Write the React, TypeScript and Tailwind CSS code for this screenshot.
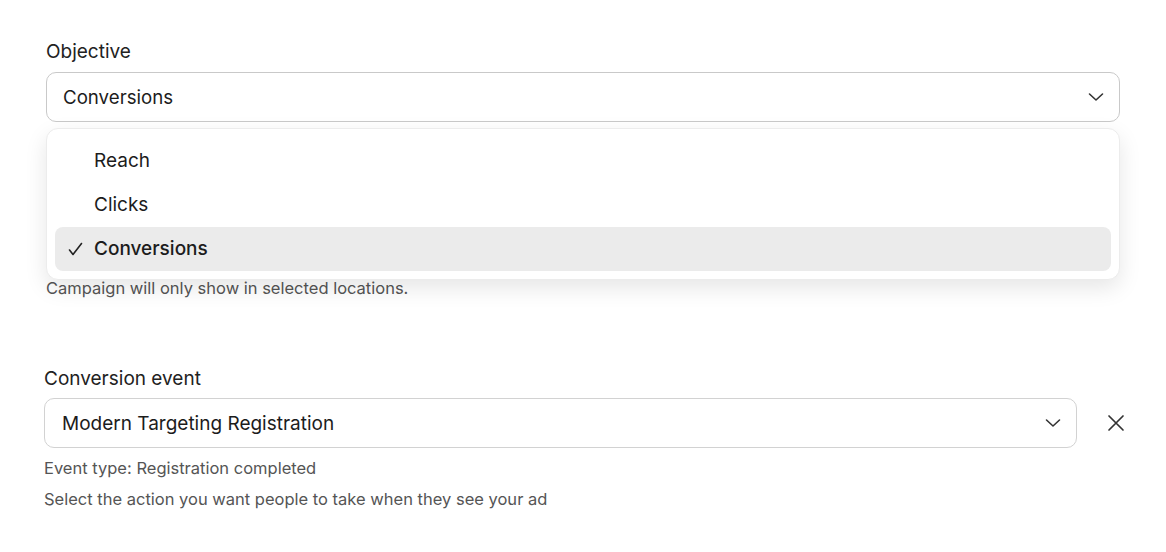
import React from "react";

const font = { fontFamily: "Inter, 'Noto Sans', sans-serif" };

function Chevron({ className = "" }: { className?: string }) {
  return (
    <svg
      className={className}
      width="18"
      height="18"
      viewBox="0 0 18 18"
      fill="none"
      stroke="#333"
      strokeWidth="1.6"
      strokeLinecap="round"
      strokeLinejoin="round"
    >
      <path d="M2.5 6 L9 12 L15.5 6" />
    </svg>
  );
}

function Close() {
  return (
    <svg
      width="18"
      height="18"
      viewBox="0 0 18 18"
      fill="none"
      stroke="#333"
      strokeWidth="1.7"
      strokeLinecap="round"
    >
      <path d="M2 2 L16 16 M16 2 L2 16" />
    </svg>
  );
}

function Check() {
  return (
    <svg
      width="15"
      height="15"
      viewBox="0 0 15 15"
      fill="none"
      stroke="#222"
      strokeWidth="1.6"
      strokeLinecap="round"
      strokeLinejoin="round"
    >
      <path d="M1.5 8 L5 12.5 L13.5 1.5" />
    </svg>
  );
}

const options = ["Reach", "Clicks", "Conversions"];

export default function App() {
  const selected = "Conversions";
  return (
    <div className="min-h-[552px] w-[1166px] bg-white text-[#1f1f1f]" style={font}>
      {/* Objective field with its open option list */}
      <div className="relative pl-[46px] pt-[38px] w-[1120px]">
        <div className="text-[19px] leading-[28px] text-[#222]">Objective</div>
        <div className="mt-[6px] flex h-[50px] items-center justify-between rounded-[10px] border border-[#c9c9c9] pl-[16px] pr-[14px]">
          <span className="text-[18.7px] text-[#1c1c1c] pt-[2px]">Conversions</span>
          <Chevron />
        </div>

        <div className="absolute left-[46px] right-0 top-[128px] z-10 rounded-[12px] border border-[#ececec] bg-white px-[8px] pb-[8px] pt-[10px] shadow-[0_8px_22px_rgba(0,0,0,0.10)]">
          {options.map((o) => {
            const active = o === selected;
            return (
              <div
                key={o}
                className={
                  "flex h-[44px] items-center rounded-[8px] " +
                  (active ? "bg-[#ebebeb]" : "")
                }
              >
                <span className="flex w-[39px] items-center pl-[13px]">
                  {active ? <Check /> : null}
                </span>
                <span
                  className={
                    "text-[19px] text-[#1c1c1c] " + (active ? "font-medium" : "")
                  }
                >
                  {o}
                </span>
              </div>
            );
          })}
        </div>

        <div className="h-[154px]" />
        <div className="text-[16.5px] leading-[24px] text-[#555]">
          Campaign will only show in selected locations.
        </div>
      </div>

      {/* Conversion event field */}
      <div className="pl-[44px] pt-[65px]">
        <div className="text-[19px] leading-[28px] text-[#222]">Conversion event</div>
        <div className="mt-[5px] flex items-center">
          <div className="flex h-[50px] w-[1033px] items-center justify-between rounded-[10px] border border-[#d2d2d2] pl-[17px] pr-[14px]">
            <span className="text-[19px] text-[#1c1c1c] pt-[2px]">Modern Targeting Registration</span>
            <Chevron />
          </div>
          <button className="ml-[24px] flex h-[30px] w-[30px] items-center justify-center">
            <Close />
          </button>
        </div>
        <div className="mt-[8px] text-[16.5px] leading-[24px] text-[#555]">
          Event type: Registration completed
        </div>
        <div className="mt-[7px] text-[16.5px] leading-[24px] text-[#555]">
          Select the action you want people to take when they see your ad
        </div>
      </div>
    </div>
  );
}
